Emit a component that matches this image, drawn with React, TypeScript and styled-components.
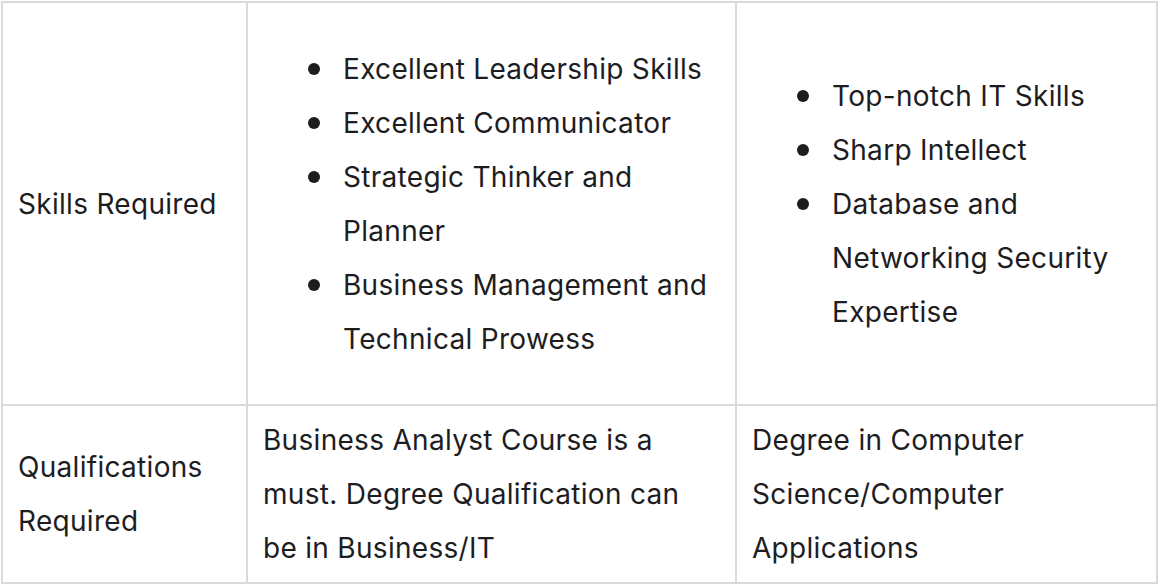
import React from 'react';
import styled, { createGlobalStyle } from 'styled-components';

const GlobalStyle = createGlobalStyle`
  html, body {
    margin: 0;
    padding: 0;
    background: #ffffff;
  }
  body {
    font-family: Inter, "Noto Sans", "Liberation Sans", sans-serif;
    color: #1d1d1f;
  }
`;

const Page = styled.div`
  padding: 1px 0 0 1px;
`;

const Table = styled.table`
  border-collapse: collapse;
  table-layout: fixed;
  width: 1155px;
  font-size: 28px;
  letter-spacing: 0.3px;
  line-height: 54px;
`;

const Col = styled.col<{ $w: number }>`
  width: ${p => p.$w}px;
`;

const Cell = styled.td`
  border: 2px solid #dadada;
  padding: 7px 15px;
  vertical-align: middle;
`;

const List = styled.ul`
  margin: 32px 0 31px;
  padding-left: 80px;
  list-style: none;
`;

const Item = styled.li`
  position: relative;

  &::before {
    content: '';
    position: absolute;
    left: -35px;
    top: 21px;
    width: 12px;
    height: 12px;
    border-radius: 50%;
    background: #1d1d1f;
  }
`;

const skillsA = [
  'Excellent Leadership Skills',
  'Excellent Communicator',
  'Strategic Thinker and Planner',
  'Business Management and Technical Prowess',
];

const skillsB = [
  'Top-notch IT Skills',
  'Sharp Intellect',
  'Database and Networking Security Expertise',
];

const App = () => (
  <Page>
    <GlobalStyle />
    <Table>
      <colgroup>
        <Col $w={245} />
        <Col $w={489} />
        <Col $w={421} />
      </colgroup>
      <tbody>
        <tr>
          <Cell>Skills Required</Cell>
          <Cell>
            <List>
              {skillsA.map(s => <Item key={s}>{s}</Item>)}
            </List>
          </Cell>
          <Cell>
            <List>
              {skillsB.map(s => <Item key={s}>{s}</Item>)}
            </List>
          </Cell>
        </tr>
        <tr>
          <Cell>Qualifications Required</Cell>
          <Cell>Business Analyst Course is a must. Degree Qualification can be in Business/IT</Cell>
          <Cell>Degree in Computer Science/Computer Applications</Cell>
        </tr>
      </tbody>
    </Table>
  </Page>
);

export default App;
